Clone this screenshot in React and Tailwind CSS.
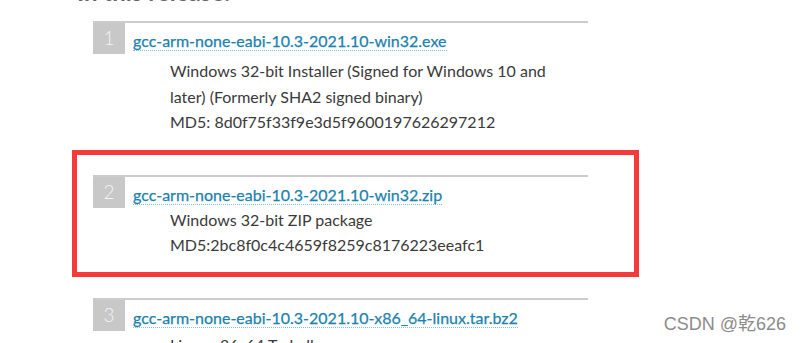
import React from 'react'

const releases = [
  {
    num: 1,
    name: 'gcc-arm-none-eabi-10.3-2021.10-win32.exe',
    lines: [
      'Windows 32-bit Installer (Signed for Windows 10 and',
      'later) (Formerly SHA2 signed binary)',
      'MD5: 8d0f75f33f9e3d5f9600197626297212',
    ],
    descClass: 'mt-[4px] leading-[25.5px]',
    gapClass: 'mb-[40px]',
  },
  {
    num: 2,
    name: 'gcc-arm-none-eabi-10.3-2021.10-win32.zip',
    lines: ['Windows 32-bit ZIP package', 'MD5:2bc8f0c4c4659f8259c8176223eeafc1'],
    descClass: '-mt-[1px] leading-[25px]',
    gapClass: 'mb-[41px]',
  },
  {
    num: 3,
    name: 'gcc-arm-none-eabi-10.3-2021.10-x86_64-linux.tar.bz2',
    lines: ['Linux x86_64 Tarball'],
    descClass: 'mt-[1px] leading-[25px]',
    gapClass: '',
  },
]

function ReleaseRow({ num, name, lines, descClass, gapClass }) {
  return (
    <li className={`w-[495px] border-t-2 border-[#cccccc] ${gapClass}`}>
      <div className="flex items-center">
        <span className="w-[32px] h-[31px] bg-[#c8c8c8] flex items-center justify-center text-[19px] text-[#f4f4f4] font-light">
          {num}
        </span>
        <a
          href="#"
          className="ml-[8px] mt-[5px] text-[16px] leading-[19px] text-[#1a82b0] border-b border-dotted border-[#86bfdc] [-webkit-text-stroke:0.25px_#1a82b0]"
        >
          {name}
        </a>
      </div>
      <div className={`ml-[77px] text-[16px] text-[#3a3a3a] ${descClass}`}>
        {lines.map((line) => (
          <p key={line}>{line}</p>
        ))}
      </div>
    </li>
  )
}

export default function App() {
  return (
    <div
      className="relative w-[802px] h-[343px] overflow-hidden bg-white"
      style={{ fontFamily: 'Lato, "Open Sans", sans-serif' }}
    >
      <div className="h-[21px] overflow-hidden pl-[77px]">
        <h3 className="-mt-[23px] text-[24px] leading-[30px] font-bold text-[#666666]">
          In this release:
        </h3>
      </div>

      <ol className="ml-[93px]">
        {releases.map((r) => (
          <ReleaseRow key={r.num} {...r} />
        ))}
      </ol>

      <div className="absolute left-[72px] top-[150px] w-[567px] h-[127px] border-[5px] border-[#f63a3a]" />

      <div
        className="absolute right-[16px] top-[312px] text-[18px] leading-[24px] text-[#8c8c8c]"
        style={{ fontFamily: '"Liberation Sans", "Noto Sans CJK SC", sans-serif', textShadow: '0 0 1px #fff' }}
      >
        CSDN @乾626
      </div>
    </div>
  )
}
